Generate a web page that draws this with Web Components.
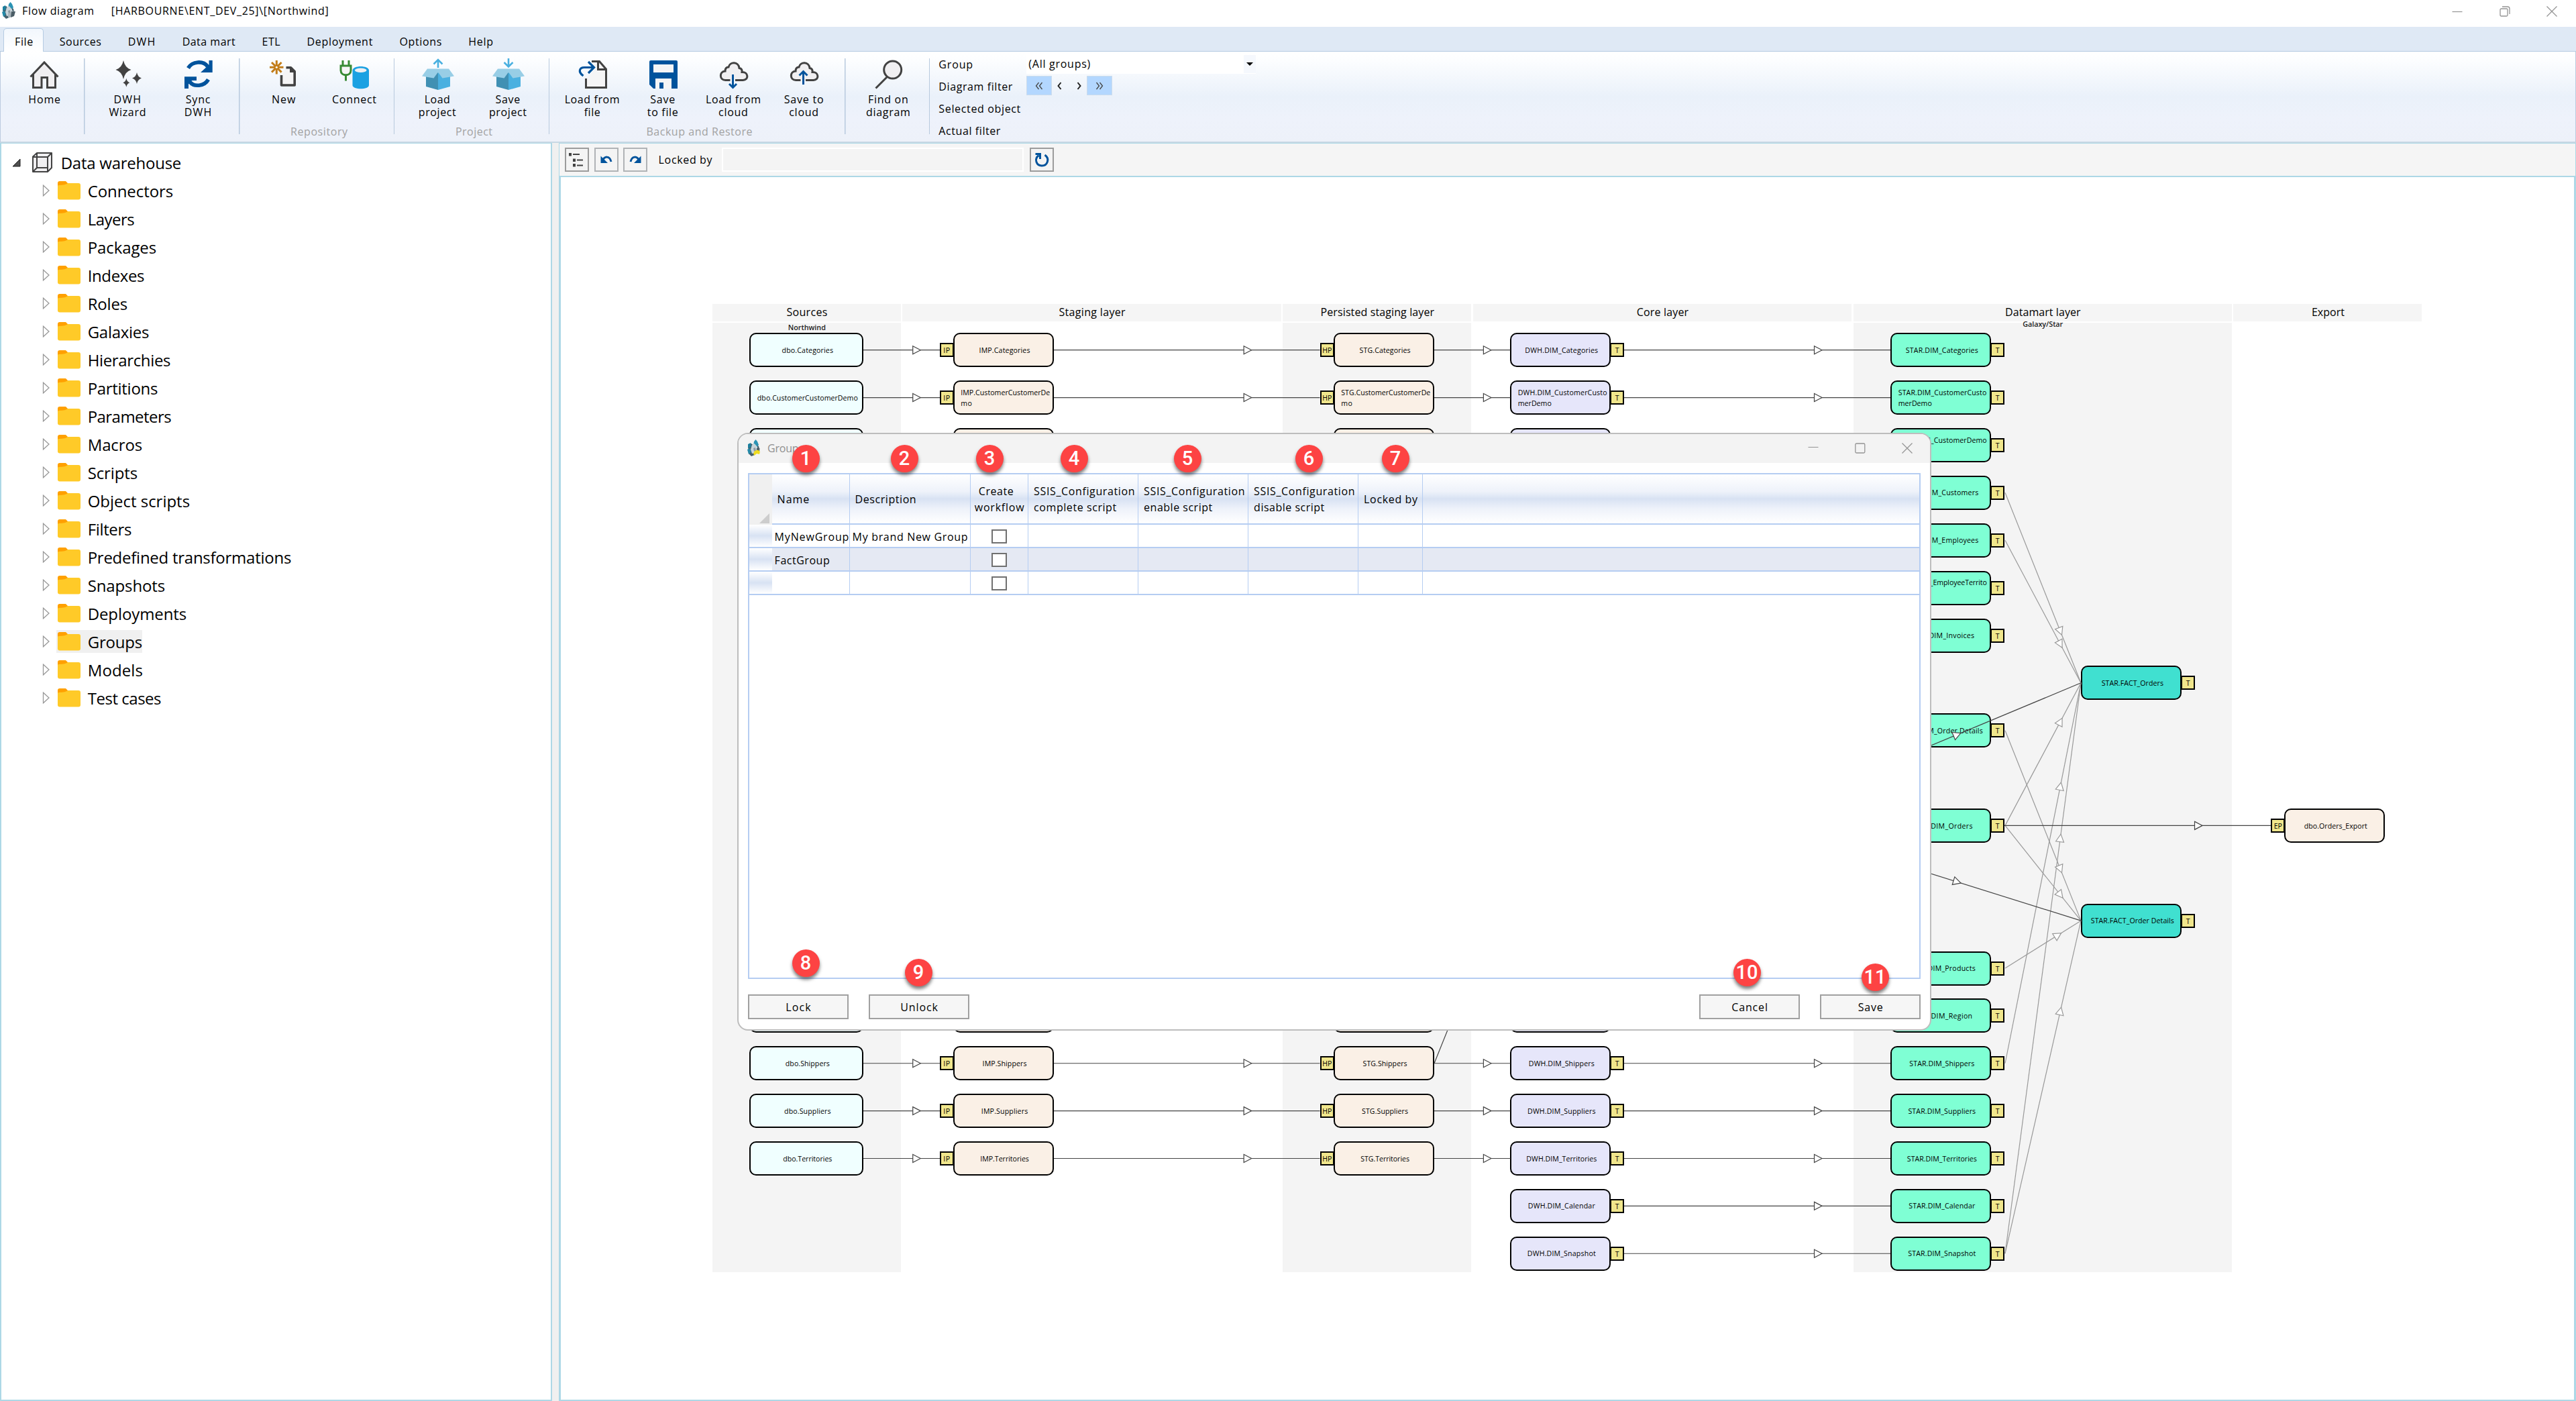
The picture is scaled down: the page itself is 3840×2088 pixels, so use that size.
<!DOCTYPE html>
<html>
  <head>
    <meta charset="utf-8">
    <title>Flow diagram</title>
    <style>
      html, body {
        margin: 0;
        height: 100%;
        overflow: hidden;
      }
      body {
        font-family: "Open Sans", "Noto Sans", sans-serif;
        font-size: 16px;
        color: #000;
        background: #fff;
      }
    </style>
  </head>
  <body>
    <flow-app></flow-app>
  </body>
  <script>
  function define (name, html, setup) {
    customElements.define(name, class extends HTMLElement {
      constructor () {
        super();
        this.attachShadow({mode: 'open'});
      }
      connectedCallback () {
        if (this.shadowRoot.childNodes.length) return;
        this.shadowRoot.innerHTML = typeof html === 'function' ? html(this) : html;
        if (setup) setup(this);
      }
    });
  }

  // text that is tightened or widened until it takes w pixels
  define('fit-text', '<style>:host { display: inline-block; white-space: pre; text-indent: 0.07em; }</style><slot></slot>', el => {
    const w = parseFloat(el.getAttribute('w'));
    const size = parseFloat(getComputedStyle(el).fontSize);
    const natural = el.getBoundingClientRect().width - size * 0.07;
    const count = el.textContent.length;
    if (w && natural) el.style.letterSpacing = ((w + size * 0.1 - natural) / count).toFixed(3) + 'px';
  });

  const star = (x, y, rx, ry) =>
    `<path fill="#424242" d="M${x} ${y - ry}Q${x + rx * 0.2} ${y - ry * 0.2} ${x + rx} ${y}Q${x + rx * 0.2} ${y + ry * 0.2} ${x} ${y + ry}Q${x - rx * 0.2} ${y + ry * 0.2} ${x - rx} ${y}Q${x - rx * 0.2} ${y - ry * 0.2} ${x} ${y - ry}z"/>`;
  const box = arrow => `
    <path fill="#4090b3" d="M6 28L24 22V48L6 43z"/>
    <path fill="#4ab0e0" d="M42 28L24 22V48L42 43z"/>
    <path fill="#98cee6" d="M8 16.500H24V21.500L17.500 30.500L0 27.500z"/>
    <path fill="#98cee6" d="M40 16.500H24V21.500L30.500 30.500L48 27.500z"/>
    <path fill="none" stroke="#4ab0e0" stroke-width="2.600" d="${arrow}"/>`;
  const cloud = arrow => `
    <path fill="#f0eff1" stroke="#424242" stroke-width="3" d="M18.500 33.500H11.500C2 33.500 2 20.500 11 20C11 14 14.500 14 16 14C18 5.500 31 5.500 32 15.500C35 16 36.500 18 36 21.500C46 21 46.500 33.500 37.500 33.500H26"/>
    <path fill="none" stroke="#00539c" stroke-width="3" d="${arrow}"/>`;
  const sheet = '#f5f5f6';
  const cluster = `
    <path fill="#44606d" d="M3 9L8 6L13 10V23L8 25L4 21z"/>
    <path fill="#2b93b4" d="M12 3L14.500 0L17 3L19 8L16 12L11 9z"/>
    <path fill="#1b7f9e" d="M3 7L7 5L8 11L3 13z"/>
    <path fill="#c9d4da" d="M9 8L12.500 6L17 11L18 15L14 20L9 21L7 15z"/>
    <path fill="#8d9ba3" d="M11 13L14 12L15 17L12 18z"/>
    <path fill="#2489a8" d="M2 15L6 13L7.500 19L4 22z"/>
    <path fill="#44606d" d="M17 9L19 10L20 14L17 13z"/>`;

  const icons = {
    logo: [24, 25, cluster + `
      <path fill="#a9b4ba" d="M11 17L17 15L16 22L11 24z"/>
      <path fill="#4b5d66" d="M16 14L22 14L20 21L15 23z"/>`],
    logoYellow: [24, 25, cluster + `
      <path fill="#4b5d66" d="M16 13L20.500 13L20 18L16 18z"/>
      <path fill="#f0dc1e" d="M13 17L18 15.500L21 18L20 22L16 21L12.500 24L11 21z"/>`],
    home: [48, 48, `
      <path fill="#f0eff1" d="M7.500 26L24 8L40.500 26V44.500H28.500V29.500H20V44.500H7.500z"/>
      <path fill="none" stroke="#424242" stroke-width="3" d="M3.500 28.500L24 7L44.500 28.500M7.500 25V44.500H20V29.500H28.500V44.500H40.500V25"/>`],
    wizard: [48, 48, star(17, 18, 11.5, 14) + star(37, 30.5, 7, 8.5) + star(21.3, 37.3, 5, 6.5)],
    sync: [48, 48, `
      <path fill="none" stroke="#00539c" stroke-width="5.600" d="M8.500 15.500C14.500 5 31 4 37.500 13"/>
      <path fill="#00539c" d="M44.700 4V22H27L33.500 16L39.500 10.500V4z"/>
      <path fill="none" stroke="#00539c" stroke-width="5.600" d="M38.500 32.500C32.500 43 17 44 11 36"/>
      <path fill="#00539c" d="M3 46V28.300H21V34H14L9 39.500V46z"/>`],
    file: [48, 48, `
      <path fill="none" stroke="#c27d1a" stroke-width="3" d="M14.300 4V24.500M4 14.300H24.500M7 7L21.600 21.600M21.600 7L7 21.600"/>
      <circle cx="14.300" cy="14.300" r="1.500" fill="#fff"/>
      <path fill="${sheet}" d="M21.500 28V41.500H41V20L35 14.500H29z"/>
      <path fill="none" stroke="#424242" stroke-width="3.600" stroke-linejoin="round" d="M21.500 26V41H41.200V20.500L35.500 14.800H28.500"/>
      <path fill="#424242" d="M34 13.500L43 22H34z"/>`],
    connect: [48, 48, `
      <path fill="#1ba1e2" d="M22.500 19C22.500 11 47 11 47 19V41C47 48 22.500 48 22.500 41z"/>
      <ellipse cx="34.700" cy="18.800" rx="8.800" ry="3.200" fill="#f0eff1"/>
      <path fill="${sheet}" stroke="#388a34" stroke-width="3" d="M5 12H20V19C20 28 5 28 5 19z"/>
      <path fill="none" stroke="#388a34" stroke-width="3" d="M8 4V12M17 4V12M12.500 25V34.500"/>`],
    load: [48, 48, box('M24 15V3M17.500 9.500L24 3L30.500 9.500')],
    save: [48, 48, box('M24 1V13M17.500 7L24 13.500L30.500 7')],
    fromFile: [48, 48, `
      <path fill="${sheet}" d="M13 32L24 20V5.500H33L43.500 17V44.500H13z"/>
      <path fill="none" stroke="#424242" stroke-width="3" d="M13.500 31V44.500H43.500V17L33.500 5.500H22M31.500 6V17.500H43"/>
      <path fill="none" stroke="#00539c" stroke-width="3.200" d="M9.500 27C1 21 4 14.500 11 14.500H25M17 6L25.500 14.500L17 23"/>`],
    floppy: [48, 48, `
      <path fill="#00539c" d="M5 4H43Q45 4 45 6V46H9L3 40V6Q3 4 5 4z"/>
      <path fill="${sheet}" d="M9 10H39V22H9zM12 31H36V46H24V37H18V46H12z"/>`],
    cloudDown: [48, 48, cloud('M22.500 25V44M17 39L22.500 44.500L28 39')],
    cloudUp: [48, 48, cloud('M22.500 40V20.500M16.500 26.500L22.500 20.500L28.500 26.500')],
    find: [48, 48, `
      <circle cx="29.700" cy="18" r="13" fill="#f0eff1" stroke="#424242" stroke-width="3"/>
      <path stroke="#424242" stroke-width="3" d="M21.500 28.500L4.500 45.500"/>`],
    cube: [30, 30, `
      <path fill="#f0eff1" stroke="#424242" stroke-width="2" stroke-linejoin="round" d="M1 6.500L7 1H29V23L23 29H1z"/>
      <path fill="none" stroke="#424242" stroke-width="2" d="M1 7H23V29M23 7L29 1M7 1V23L1 29M7 23H23"/>`],
    folder: [34, 28, `
      <path fill="#ffa000" d="M0 3Q0 0 3 0H12L15 3H30V14H0z"/>
      <path fill="#ffca28" d="M0 7Q0 6 2 6Q12 6 15 3H31Q34 3 34 6V24.500Q34 27.500 31 27.500H3Q0 27.500 0 24.500z"/>`],
    tree: [30, 30, `
      <path fill="#424242" d="M3 5H7V9.500H3zM9 13.500H13V18H9zM9 21H13V25.500H9z"/>
      <path stroke="#424242" stroke-width="2" d="M9 7H19M15 15.500H24M15 23.500H24"/>`],
    undo: [30, 30, `
      <path fill="none" stroke="#00539c" stroke-width="3" d="M9 17C12 9 20 9 22 18"/>
      <path fill="#00539c" d="M6.500 9.500V20H17z"/>`],
    redo: [30, 30, `
      <path fill="none" stroke="#00539c" stroke-width="3" d="M21 17C18 9 10 9 8 18"/>
      <path fill="#00539c" d="M23.500 9.500V20H13z"/>`],
    refresh: [30, 30, `
      <path fill="none" stroke="#00539c" stroke-width="3" d="M10.500 8.500C3 14 7 24 15 24C24 24 27 13 19.500 8"/>
      <path fill="none" stroke="#00539c" stroke-width="3" d="M5.500 6.500H12.500V14"/>`],
    minimize: [16, 16, '<path stroke="#949494" stroke-width="1.200" d="M.5 8.500H15.500"/>'],
    restore: [16, 16, `
      <rect x="1" y="4" width="11" height="11" rx="1.500" fill="none" stroke="#949494" stroke-width="1.300"/>
      <path fill="none" stroke="#949494" stroke-width="1.300" d="M4 1H12Q15 1 15 4V12"/>`],
    maximize: [16, 16, '<rect x=".8" y="1" width="14" height="14" rx="1.500" fill="none" stroke="#949494" stroke-width="1.300"/>'],
    close: [16, 16, '<path stroke="#949494" stroke-width="1.300" d="M.5 .5L15.500 15.500M15.500 .5L.5 15.500"/>'],
    left2: [14, 14, '<path fill="none" stroke="#444" stroke-width="1.300" d="M6.500 2L2.500 7L6.500 12M11.500 2L7.500 7L11.500 12"/>'],
    right2: [14, 14, '<path fill="none" stroke="#444" stroke-width="1.300" d="M2.500 2L6.500 7L2.500 12M7.500 2L11.500 7L7.500 12"/>'],
    left: [14, 14, '<path fill="none" stroke="#222" stroke-width="2" d="M9.500 2L5.500 7L9.500 12"/>'],
    right: [14, 14, '<path fill="none" stroke="#222" stroke-width="2" d="M4.500 2L8.500 7L4.500 12"/>']
  };

  define('app-icon', el => {
    const [w, h, body] = icons[el.getAttribute('name')];
    return `
    <style>
      :host { display: block; flex: none; width: ${w}px; height: ${h}px; }
      svg { display: block; }
    </style>
    <svg width="${w}" height="${h}" viewBox="0 0 ${w} ${h}">${body}</svg>`;
  });

  define('title-bar', `
    <style>
      :host { display: flex; align-items: center; height: 40px; background: #fff; }
      .logo { margin: -10px 0 0 1px; }
      .name { margin: -8px 0 0 7px; line-height: 24px; }
      .path { margin: -8px 0 0 24px; line-height: 24px; }
      .controls { display: flex; gap: 54.500px; margin: -7px 28px 0 auto; }
    </style>
    <app-icon class="logo" name="logo"></app-icon>
    <fit-text class="name" w="106">Flow diagram</fit-text>
    <fit-text class="path" w="323">[HARBOURNE\\ENT_DEV_25]\\[Northwind]</fit-text>
    <div class="controls">
      <app-icon name="minimize"></app-icon>
      <app-icon name="restore"></app-icon>
      <app-icon name="close"></app-icon>
    </div>`);

  const tabs = [['File', 26], ['Sources', 61], ['DWH', 40], ['Data mart', 78], ['ETL', 26], ['Deployment', 97], ['Options', 62], ['Help', 36]];
  define('ribbon-tabs', `
    <style>
      :host { display: flex; align-items: flex-end; box-sizing: border-box; height: 37px; padding-left: 5px; background: #dfe9f5; border-bottom: 1px solid #b5cbe2; }
      .tab { box-sizing: border-box; height: 35px; padding: 6px 19.200px 0 19px; line-height: 28px; margin-bottom: -1px; }
      .tab.on { margin-right: 4px; background: linear-gradient(#f2f7fd, #fff); border: 1px solid #b5cbe2; border-bottom: 0; border-radius: 5px 5px 0 0; padding: 5px 14px 0 15px; }
    </style>
    ${tabs.map((t, i) => `<div class="tab${i ? '' : ' on'}"><fit-text w="${t[1]}">${t[0]}</fit-text></div>`).join('')}`);

  define('ribbon-button', el => `
    <style>
      :host { display: flex; flex-direction: column; align-items: center; width: 105.2px; }
      .label { margin-top: 5px; line-height: 19px; text-align: center; }
      .label.two { margin-right: 4px; }
      app-icon { margin-left: -1px; }
      fit-text { display: table; margin: 0 auto; }
    </style>
    <app-icon name="${el.getAttribute('icon')}"></app-icon>
    <div class="label${el.getAttribute('label').includes(';') ? ' two' : ''}">
      ${el.getAttribute('label').split(';').map(l => `<fit-text w="${l.split(':')[1]}">${l.split(':')[0]}</fit-text>`).join('')}
    </div>`);

  define('ribbon-group', el => `
    <style>
      :host { display: flex; flex-direction: column; box-sizing: border-box; height: 130px; padding: 9px 8px 0 12.500px; background: linear-gradient(#b8cade, #b8cade) right 10px / 1.500px 113px no-repeat; }
      .row { display: flex; height: 100px; }
      .name { text-align: center; line-height: 20px; color: #a2a2a2; }
    </style>
    <div class="row"><slot></slot></div>
    <div class="name"><fit-text w="${el.getAttribute('w')}">${el.getAttribute('name') || ''}</fit-text></div>`);

  define('filter-panel', `
    <style>
      :host { display: grid; grid-template-columns: 132px 342px; grid-template-rows: 33px 33px 33px 33px; padding: 4px 0 0 12px; line-height: 31px; }
      .combo { display: flex; align-items: center; justify-content: space-between; height: 29px; padding-left: 2px; background: #fff; }
      .drop { display: flex; justify-content: center; width: 18px; height: 27px; background: #f5f8fd; }
      .drop::after { content: ""; margin-top: 11px; height: 0; border: 5px solid transparent; border-top-color: #000; border-bottom: 0; }
      .nav { display: flex; align-items: center; height: 27px; }
      .nav div { display: flex; justify-content: center; align-items: center; height: 27px; }
      .nav .prev { width: 22px; }
      .nav .next { width: 30px; padding-left: 8px; box-sizing: border-box; }
      .nav .on { width: 36px; background: #b3d7ff; border: 1px solid #ccdcec; }
    </style>
    <div><fit-text w="50">Group</fit-text></div>
    <div class="combo"><fit-text w="91">(All groups)</fit-text><div class="drop"></div></div>
    <div><fit-text w="109">Diagram filter</fit-text></div>
    <div class="nav">
      <div class="on"><app-icon name="left2"></app-icon></div>
      <div class="prev"><app-icon name="left"></app-icon></div>
      <div class="next"><app-icon name="right"></app-icon></div>
      <div class="on"><app-icon name="right2"></app-icon></div>
    </div>
    <div><fit-text w="121">Selected object</fit-text></div><div></div>
    <div><fit-text w="91">Actual filter</fit-text></div><div></div>`);

  define('ribbon-bar', `
    <style>
      :host { display: flex; box-sizing: border-box; height: 136px; background: linear-gradient(#fff 0, #fdfeff 8%, #eaf1fa 50%, #eef2fb 75%, #edf1f9 100%); border: 1px solid #bccbdf; border-top: 0; border-bottom: 2px solid #c8d8e4; }
    </style>
    <ribbon-group><ribbon-button icon="home" label="Home:47"></ribbon-button></ribbon-group>
    <ribbon-group>
      <ribbon-button icon="wizard" label="DWH:40;Wizard:54"></ribbon-button>
      <ribbon-button icon="sync" label="Sync:36;DWH:40"></ribbon-button>
    </ribbon-group>
    <ribbon-group name="Repository" w="84">
      <ribbon-button icon="file" label="New:35"></ribbon-button>
      <ribbon-button icon="connect" label="Connect:65"></ribbon-button>
    </ribbon-group>
    <ribbon-group name="Project" w="54">
      <ribbon-button icon="load" label="Load:37;project:55"></ribbon-button>
      <ribbon-button icon="save" label="Save:36;project:55"></ribbon-button>
    </ribbon-group>
    <ribbon-group name="Backup and Restore" w="157">
      <ribbon-button icon="fromFile" label="Load from:81;file:23"></ribbon-button>
      <ribbon-button icon="floppy" label="Save:36;to file:45"></ribbon-button>
      <ribbon-button icon="cloudDown" label="Load from:81;cloud:43"></ribbon-button>
      <ribbon-button icon="cloudUp" label="Save to:58;cloud:43"></ribbon-button>
    </ribbon-group>
    <ribbon-group><ribbon-button icon="find" label="Find on:59;diagram:65"></ribbon-button></ribbon-group>
    <filter-panel></filter-panel>`);

  define('tree-item', el => `
    <style>
      :host { display: flex; align-items: center; height: 42px; padding-left: 61px; font-size: 24px; }
      .arrow { width: 11px; height: 18px; margin: -1px 10px 0 0; }
      .item { display: flex; align-items: center; height: 34px; padding: 0 0 0 2px; line-height: 34px; }
      :host([selected]) .item { background: #f0f0f0; }
      app-icon { margin: 0 9px 1px 0; }
      fit-text { margin-top: 1px; }
    </style>
    <svg class="arrow" viewBox="0 0 11 18"><path fill="#fff" stroke="#999" stroke-width="1.300" d="M1.500 1.200L10 9L1.500 16.800z"/></svg>
    <div class="item"><app-icon name="folder"></app-icon><fit-text w="${el.getAttribute('w')}">${el.getAttribute('label')}</fit-text></div>`);

  const folders = [['Connectors', 125], ['Layers', 67], ['Packages', 100], ['Indexes', 82], ['Roles', 57], ['Galaxies', 89], ['Hierarchies', 121], ['Partitions', 102], ['Parameters', 122], ['Macros', 79], ['Scripts', 72], ['Object scripts', 150], ['Filters', 63], ['Predefined transformations', 301], ['Snapshots', 113], ['Deployments', 145], ['Groups', 79], ['Models', 80], ['Test cases', 107]];
  define('object-tree', `
    <style>
      :host { display: block; box-sizing: border-box; width: 823px; padding-top: 7px; background: #fff; border: 2px solid #add8e6; border-top-width: 1px; }
      .root { display: flex; align-items: center; height: 42px; padding-left: 16px; font-size: 24px; line-height: 34px; }
      .root svg { width: 13px; height: 13px; margin-right: 17px; }
      .root app-icon { margin-right: 11px; }
      .root fit-text { margin-top: 1px; }
    </style>
    <div class="root">
      <svg viewBox="0 0 13 13"><path fill="#505050" stroke="#222" d="M12 1V12H1z"/></svg>
      <app-icon name="cube"></app-icon>
      <fit-text w="177">Data warehouse</fit-text>
    </div>
    ${folders.map(f => `<tree-item label="${f[0]}" w="${f[1]}"${f[0] === 'Groups' ? ' selected' : ''}></tree-item>`).join('')}`);

  define('diagram-toolbar', `
    <style>
      :host { display: flex; align-items: center; box-sizing: border-box; height: 51px; padding: 0 0 1px 8px; background: #f5f5f5; border: 1px solid #add8e6; border-bottom-width: 2px; }
      .btn { display: flex; flex: none; align-items: center; justify-content: center; box-sizing: border-box; width: 36px; height: 36px; margin-right: 7.500px; border: 2px solid #b0b3b6; background: #f4f4f4; }
      .btn.dark { border-color: #9c9c9c; }
      .field { box-sizing: border-box; width: 450px; height: 36px; margin: 0 9px 0 14px; border: 2px solid #fff; background: #f4f4f4; }
      fit-text { margin-left: 8px; }
    </style>
    <div class="btn dark"><app-icon name="tree"></app-icon></div>
    <div class="btn"><app-icon name="undo"></app-icon></div>
    <div class="btn"><app-icon name="redo"></app-icon></div>
    <fit-text w="79">Locked by</fit-text>
    <div class="field"></div>
    <div class="btn dark"><app-icon name="refresh"></app-icon></div>`);

  // origin of the canvas on the page, and the grid of its rows
  const left = 836, top_ = 264;
  const rowY = r => 521.7 + r * 70.87;
  const tagWidth = {T: 5, HP: 13, IP: 9, EP: 11};

  define('flow-node', el => {
    const tag = el.getAttribute('tag');
    const lines = (el.getAttribute('lines') || '').split('|').filter(Boolean);
    return `
    <style>
      :host { position: absolute; box-sizing: border-box; height: 51px; border: 2px solid #000; border-radius: 10px; display: flex; flex-direction: column; justify-content: center; align-items: ${lines.length > 1 ? 'flex-start' : 'center'}; font-size: 10.600px; line-height: 16px; }
      fit-text { margin-left: ${lines.length > 1 ? 9 : 3}px; }
      .tag { position: absolute; top: 13px; box-sizing: border-box; width: 21px; height: 21px; border: 2px solid #000; background: #f0e68c; line-height: 18px; text-align: center; }
      .tag.before { right: calc(100% + 1px); }
      .tag.after { left: calc(100% + 1px); }
      .tag fit-text { margin: 0; }
    </style>
    ${lines.map(l => `<fit-text w="${l.split(':')[1]}">${l.split(':')[0]}</fit-text>`).join('')}
    ${tag ? `<div class="tag ${tag === 'T' ? 'after' : 'before'}"><fit-text w="${tagWidth[tag]}">${tag}</fit-text></div>` : ''}`;
  });

  // row, name, widths of the texts in each of the columns
  const rows = [
    [0, 'Categories', 75.5, 75, 75, 108, 107],
    [1, null],
    [2, ''],
    [14, ''],
    [15, 'Shippers', 65, 65, 65, 97, 96],
    [16, 'Suppliers', 68.5, 68.5, 68, 100.6, 99.8],
    [17, 'Territories', 72, 71.5, 71.5, 104, 103],
    [18, 'Calendar', 0, 0, 0, 99, 98],
    [19, 'Snapshot', 0, 0, 0, 101, 100]
  ];
  const columns = [
    {x: 1117, w: 170, prefix: 'dbo.', fill: '#f0ffff', tag: ''},
    {x: 1420.5, w: 150.5, prefix: 'IMP.', fill: '#faf0e6', tag: 'IP'},
    {x: 1987.5, w: 150.5, prefix: 'STG.', fill: '#faf0e6', tag: 'HP'},
    {x: 2251, w: 150, prefix: 'DWH.DIM_', fill: '#e6e6fa', tag: 'T'},
    {x: 2818, w: 150, prefix: 'STAR.DIM_', fill: '#7fffd4', tag: 'T'}
  ];
  const wrapped = ['dbo.CustomerCustomerDemo:149', 'IMP.CustomerCustomerDe:132|mo:16', 'STG.CustomerCustomerDe:132|mo:16', 'DWH.DIM_CustomerCusto:132|merDemo:49', 'STAR.DIM_CustomerCusto:130.6|merDemo:49'];
  const stars = [
    [2, 'STAR.DIM_CustomerDemo:131|graphics:42'],
    [3, 'STAR.DIM_Customers:108'],
    [4, 'STAR.DIM_Employees:108'],
    [5, 'STAR.DIM_EmployeeTerrito:131|ries:18'],
    [6, 'STAR.DIM_Invoices:96'],
    [8, 'STAR.DIM_Order Details:121'],
    [10, 'STAR.DIM_Orders:91'],
    [13, 'STAR.DIM_Products:99'],
    [14, 'STAR.DIM_Region:90']
  ];

  const nodes = [];
  const edges = [];
  const node = (x, w, row, fill, tag, lines) => nodes.push(
    `<flow-node style="left:${x - left}px;top:${rowY(row) - 25.4 - top_}px;width:${w}px;background:${fill}" tag="${tag}" lines="${lines}"></flow-node>`);
  // the arrow head sits at about three quarters of the line
  const edge = (x1, r1, x2, r2, color) => {
    const y1 = rowY(r1), y2 = rowY(r2);
    const len = Math.hypot(x2 - x1, y2 - y1);
    const angle = Math.atan2(y2 - y1, x2 - x1) * 180 / Math.PI;
    const at = len * (len < 140 ? 0.695 : 0.728);
    edges.push(`<g transform="translate(${x1 - left} ${y1 - top_}) rotate(${angle})" stroke="${color}">
      <path d="M0 0H${len}"/><path fill="#fff" d="M${at - 5.5} -6L${at + 6} 0L${at - 5.5} 6z"/></g>`);
  };

  rows.forEach(([r, name, ...w]) => {
    columns.forEach((c, i) => {
      if (r >= 18 && i < 3) return;
      if (i === 4 && (r === 2 || r === 14)) return;
      const lines = name === null ? wrapped[i] : name ? `${c.prefix}${name}:${w[i]}` : '';
      node(c.x, c.w, r, c.fill, name === '' ? '' : c.tag, lines);
    });
    if (name === '') return;
    if (r < 18) {
      edge(1287, r, 1401, r, '#444');
      edge(1571, r, 1967.5, r, '#444');
      edge(2138, r, 2251.5, r, '#444');
    }
    edge(2421, r, 2818, r, '#444');
  });
  stars.forEach(([r, lines]) => node(2818, 150, r, '#7fffd4', 'T', lines));
  node(3102, 150, 7, '#40e0d0', 'T', 'STAR.FACT_Orders:91.3');
  node(3102, 150, 12, '#40e0d0', 'T', 'STAR.FACT_Order Details:123');
  node(3405, 150, 10, '#faf0e6', 'EP', 'dbo.Orders_Export:93');
  [[3, 7], [4, 7], [10, 7], [15, 7], [19, 7], [8, 12], [10, 12], [13, 12], [19, 12]].forEach(([a, b]) => edge(2989, a, 3102, b, '#999'));
  edge(2423, 11, 3102, 7, '#444');
  edge(2423, 9, 3102, 12, '#444');
  edge(2138, 15, 2252, 11, '#444');
  edge(2988, 10, 3385, 10, '#444');

  define('flow-canvas', `
    <style>
      :host { display: block; position: relative; box-sizing: border-box; flex: 1; overflow: hidden; background: #fff; border: 3px solid #add8e6; border-top: 0; border-bottom-width: 2px; }
      .lanes { display: grid; grid-template-columns: 281px 564.500px 281px 564.500px 564.500px 281px; column-gap: 2.400px; padding: 189px 0 0 226px; }
      .head { height: 25.500px; background: #f5f5f5; text-align: center; line-height: 24px; }
      .body { height: 1415px; margin-top: 2.500px; text-align: center; font-size: 10.800px; font-weight: 600; color: #222; line-height: 14px; }
      .body.on { background: #f4f4f4; }
      .body fit-text { display: table; margin: 0 auto; }
      .body .star { margin-top: -5px; }
      svg { position: absolute; left: 0; top: 0; }
    </style>
    <div class="lanes">
      <div class="head"><fit-text w="59.5">Sources</fit-text></div>
      <div class="head"><fit-text w="98">Staging layer</fit-text></div>
      <div class="head"><fit-text w="168">Persisted staging layer</fit-text></div>
      <div class="head"><fit-text w="76">Core layer</fit-text></div>
      <div class="head"><fit-text w="111">Datamart layer</fit-text></div>
      <div class="head"><fit-text w="47.5">Export</fit-text></div>
      <div class="body on"><fit-text w="55">Northwind</fit-text></div>
      <div class="body"></div>
      <div class="body on"></div>
      <div class="body"></div>
      <div class="body on"><fit-text class="star" w="59">Galaxy/Star</fit-text></div>
      <div class="body"></div>
    </div>
    ${nodes.join('')}
    <svg width="3001" height="1822" fill="none" stroke-width="1.200">${edges.join('')}</svg>`);

  define('group-grid', `
    <style>
      :host { display: flex; flex-direction: column; box-sizing: border-box; height: 754px; border: 2px solid #b5cdf2; background: #fff; }
      .row { display: grid; grid-template-columns: 33.500px 116px 180.500px 86px 164px 164px 164px 95.500px 1fr; grid-template-rows: 100%; height: 35px; }
      .row > div { display: flex; align-items: center; box-sizing: border-box; border-right: 1.500px solid #b5cdf2; border-bottom: 2px solid #b5cdf2; padding-left: 3px; }
      .row > div:last-child { border-right: 0; }
      .row.alt > div { background: #e5e9f3; }
      .row > div:first-child, .row.alt > div:first-child { border-right: 0; background: linear-gradient(#fff, #d8e2f3 50%, #fff); }
      .row.head { height: 75px; line-height: 24px; }
      .row.head > div { padding: 0 0 0 7px; background: linear-gradient(#fff, #eef2fa 35%, #d8e2f3 50%, #eef2fa 70%, #fff); }
      .row.head > div:first-child { justify-content: flex-end; align-items: flex-end; padding: 0 4px 2px 0; background: #f0f0f0; border-bottom: 0; }
      .row > .mid, .row.head > .mid { justify-content: center; text-align: center; padding: 0; }
      .head fit-text { display: table; }
      .mid .first { margin-left: 6px; }
      .row:not(.head) fit-text { margin-top: 2px; }
      .check { width: 19px; height: 17px; margin-top: 1px; border: 2px solid #707070; background: #fff; }
    </style>
    <div class="row head">
      <div><svg width="15" height="15"><path fill="#cdcdcd" d="M15 0V15H0z"/></svg></div>
      <div><fit-text w="47">Name</fit-text></div>
      <div><fit-text w="90">Description</fit-text></div>
      <div class="mid"><span><fit-text class="first" w="51">Create</fit-text><fit-text w="73">workflow</fit-text></span></div>
      <div><span><fit-text w="149.5">SSIS_Configuration</fit-text><fit-text w="122">complete script</fit-text></span></div>
      <div><span><fit-text w="149.5">SSIS_Configuration</fit-text><fit-text w="101">enable script</fit-text></span></div>
      <div><span><fit-text w="149.5">SSIS_Configuration</fit-text><fit-text w="104">disable script</fit-text></span></div>
      <div><fit-text w="79">Locked by</fit-text></div>
      <div></div>
    </div>
    ${[['MyNewGroup:110', 'My brand New Group:171'], ['FactGroup:81', ''], ['', '']].map((r, i) => `
    <div class="row${i === 1 ? ' alt' : ''}">
      <div></div>
      ${r.map(c => `<div>${c && `<fit-text w="${c.split(':')[1]}">${c.split(':')[0]}</fit-text>`}</div>`).join('')}
      <div class="mid"><div class="check"></div></div>
      <div></div><div></div><div></div><div></div><div></div>
    </div>`).join('')}`);

  define('dialog-button', el => `
    <style>
      :host { display: flex; align-items: center; justify-content: center; box-sizing: border-box; width: 150px; height: 37px; border: 2px solid #a0a0a0; background: #f6f6f6; }
    </style>
    <fit-text w="${el.getAttribute('w')}">${el.getAttribute('label')}</fit-text>`);

  define('groups-dialog', `
    <style>
      :host { position: absolute; left: 1099px; top: 645px; box-sizing: border-box; width: 1780px; height: 891px; border: 2px solid #bdbdbd; border-radius: 16px; overflow: hidden; background: #fff; }
      .title { display: flex; align-items: center; box-sizing: border-box; height: 43px; padding: 0 26px 0 11px; background: #f3f3f3; color: #909090; }
      .title app-icon:first-child { margin-top: -2px; }
      .title fit-text { margin: -1px 0 0 7px; }
      .controls { display: flex; gap: 54px; margin: -1px 0 0 auto; }
      group-grid { margin: 15px 14px 0 14px; }
      .buttons { display: flex; gap: 30px; margin: 23px 14px 0 14px; }
      .buttons .space { flex: 1; }
    </style>
    <div class="title">
      <app-icon name="logoYellow"></app-icon>
      <fit-text w="52">Groups</fit-text>
      <div class="controls">
        <app-icon name="minimize"></app-icon>
        <app-icon name="maximize"></app-icon>
        <app-icon name="close"></app-icon>
      </div>
    </div>
    <group-grid></group-grid>
    <div class="buttons">
      <dialog-button label="Lock" w="37"></dialog-button>
      <dialog-button label="Unlock" w="55"></dialog-button>
      <div class="space"></div>
      <dialog-button label="Cancel" w="53"></dialog-button>
      <dialog-button label="Save" w="36"></dialog-button>
    </div>`);

  define('num-badge', `
    <style>
      :host { position: absolute; width: 41px; height: 41px; margin: -20.500px 0 0 -20.500px; border-radius: 50%; background: #fd4343; color: #fff; font: 500 29px/41px Roboto, sans-serif; text-align: center; box-shadow: 0 4px 5px rgba(0, 0, 0, 0.5); }
    </style>
    <slot></slot>`);

  const badges = [[1201, 683], [1348, 683], [1475, 683], [1601, 683], [1770, 683], [1951, 683], [2080, 683], [1201, 1435], [1369, 1449], [2604, 1449], [2795, 1456]];
  define('flow-app', `
    <style>
      :host { display: flex; flex-direction: column; width: 3840px; height: 2088px; position: relative; overflow: hidden; }
      .main { display: flex; flex: 1; background: #f0f0f0; gap: 10px; }
      .right { display: flex; flex: 1; flex-direction: column; }
    </style>
    <title-bar></title-bar>
    <ribbon-tabs></ribbon-tabs>
    <ribbon-bar></ribbon-bar>
    <div class="main">
      <object-tree></object-tree>
      <div class="right">
        <diagram-toolbar></diagram-toolbar>
        <flow-canvas></flow-canvas>
      </div>
    </div>
    <groups-dialog></groups-dialog>
    ${badges.map((b, i) => `<num-badge style="left:${b[0]}px;top:${b[1]}px">${i + 1}</num-badge>`).join('')}`);
  </script>
</html>
